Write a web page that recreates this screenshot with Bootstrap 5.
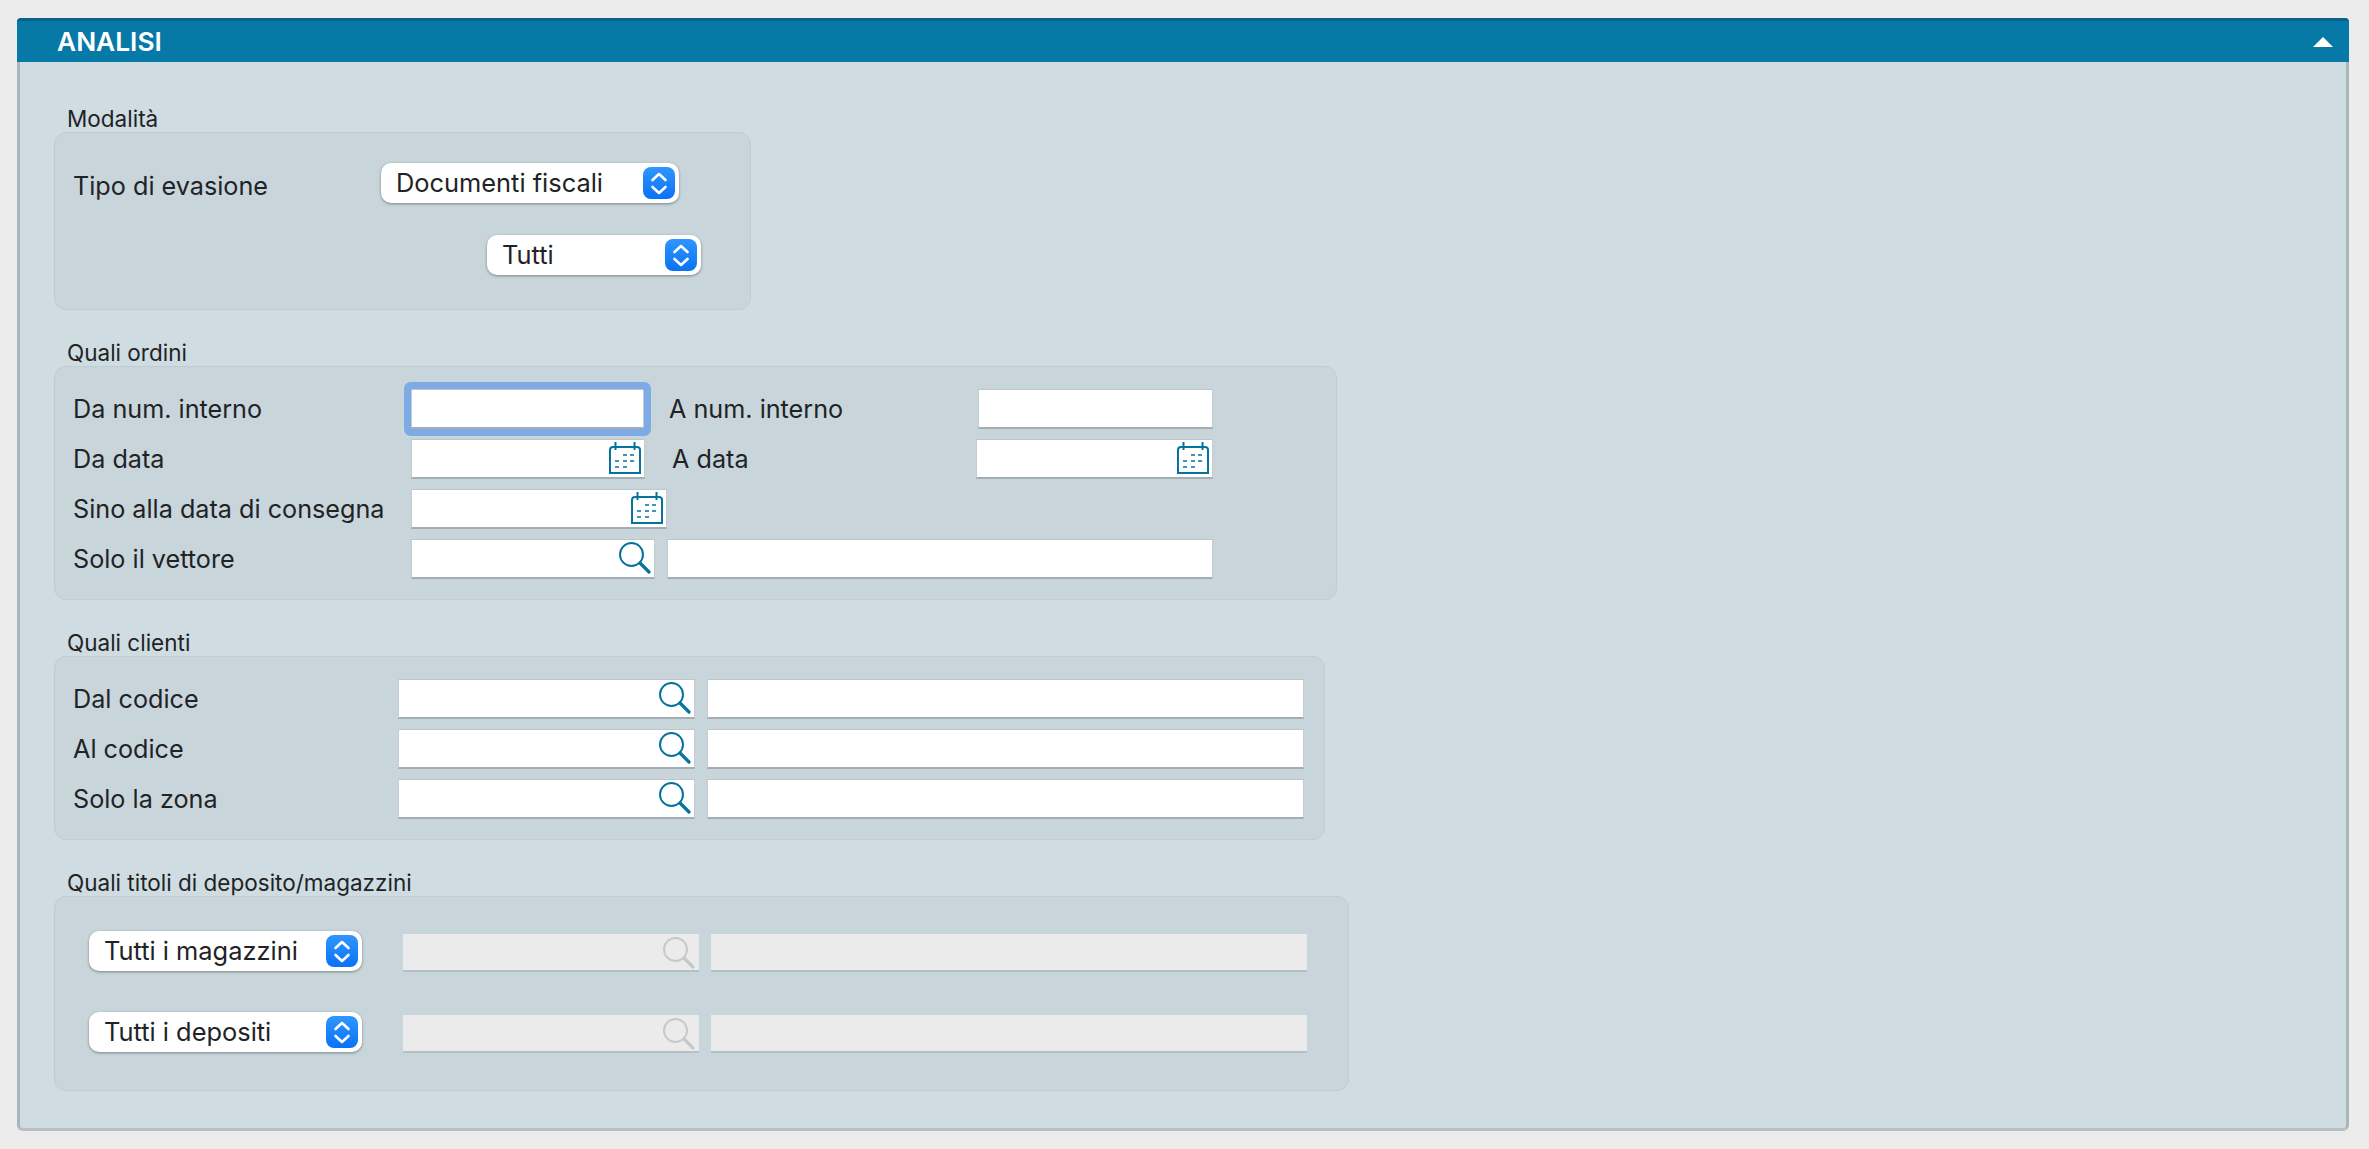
<!DOCTYPE html>
<html lang="it">
<head>
<meta charset="utf-8">
<title>Analisi</title>
<link href="https://cdn.jsdelivr.net/npm/bootstrap@5.3.0/dist/css/bootstrap.min.css" rel="stylesheet">
<style>
html, body { background: #ececec; }
body { font-family: Inter, "Liberation Sans", sans-serif; color: #1f2326; font-size: 25.2px; }
.sheet { margin: 18px 20px 19px 17px; background: #cfdce2; border-right: 3px solid #a9b6bc; border-bottom: 3px solid #b9bfc2; border-left: 3px solid #a9b6bc; border-radius: 4px 4px 6px 6px; }
.sheet-head { margin: 0 -3px; height: 44px; background: #0779a6; border-top: 3px solid #06628a; border-radius: 4px 4px 0 0; padding-left: 40px; padding-right: 16px; color: #fff; font-weight: 600; font-size: 26.3px; line-height: 41px; }
.tri { width: 0; height: 0; border-left: 10px solid transparent; border-right: 10px solid transparent; border-bottom: 10px solid #fff; }
.sheet-body { padding: 42px 0 37px 34px; }
.grp-title { height: 28px; line-height: 30px; padding-left: 13px; font-size: 22.5px; }
.grp-box { background: #c8d5db; border: 1px solid #bfcdd3; border-radius: 12px; }
.grp + .grp { margin-top: 28px; }
.w-a { width: 697px; height: 178px; padding: 30px 0 0 18px; }
.w-b { width: 1283px; padding: 22px 0 20px 18px; }
.w-c { width: 1271px; padding: 22px 0 20px 18px; }
.w-d { width: 1295px; padding: 34px 0 37px 34px; }
.lb-a { width: 308px; height: 40px; padding-top: 5px; }
.lb-b { width: 338px; padding-top: 2px; }
.lb-c { width: 325px; padding-top: 2px; }
.lb-d { width: 334px; padding: 2px 0 0 25px; }
.lb-e { width: 331px; padding: 2px 0 0 27px; }
.rw { height: 40px; }
.rw + .rw { margin-top: 10px; }
.field.form-control { height: 40px; padding: 0 8px; background: #fff; border: 0; border-top: 1px solid #bcc6cb; border-left: 1px solid #c3ccd1; border-right: 1px solid #c3ccd1; border-bottom: 2px solid #a3adb2; border-radius: 0; box-shadow: none; }
.ring.form-control { box-shadow: 0 0 0 7px #7eaae6; border-radius: 2px; }
.field.form-control:disabled { height: 38px; background: #ebebeb; border: 0; border-bottom: 2px solid #b3c0c7; }
.ico { position: absolute; width: 32px; height: 32px; pointer-events: none; right: 4px; top: 3px; }
.ink { fill: none; stroke: #06739f; stroke-width: 2; }
.ink-thin { fill: none; stroke: #06739f; stroke-width: 1.7; }
.ink-off { fill: none; stroke: #c6c8c9; stroke-width: 2; }
.pick { position: relative; height: 40px; }
.pick .form-select { height: 40px; padding: 0 40px 0 15px; font-size: 25.4px; color: #1f2326; background-color: #fff; background-image: none; border: 0; border-radius: 10px; box-shadow: 0 1px 3px rgba(0,0,0,.38); }
.pick svg { position: absolute; right: 4px; top: 4px; width: 32px; height: 32px; pointer-events: none; }
.sp-a { width: 298px; }
.sp-b { width: 214px; margin-left: 414px; margin-top: 32px; }
.sp-d { width: 273px; }
.w1 { width: 233px; } .w2 { width: 234px; } .w3 { width: 256px; } .w4 { width: 244px; } .w5 { width: 235px; } .w6 { width: 237px; } .w7 { width: 546px; } .w8 { width: 297px; } .w9 { width: 597px; } .w10 { width: 296px; } .w11 { width: 596px; }
.after { margin-left: 12px; }
.off { margin-left: 41px; margin-top: 3px; }
.off-b { margin-left: 12px; margin-top: 3px; }
.rw-d + .rw-d { margin-top: 40px; }
</style>
</head>
<body>
<svg width="0" height="0" class="position-absolute">
  <defs>
    <linearGradient id="blu" x1="0" y1="0" x2="0" y2="1"><stop offset="0" stop-color="#2f96ff"/><stop offset="1" stop-color="#0a72f5"/></linearGradient>
    <symbol id="step" viewBox="0 0 32 32"><rect width="32" height="32" rx="8" fill="url(#blu)"/><path d="M9.500 13 16 7l6.500 6M9.500 20l6.500 6 6.500-6" fill="none" stroke="#fff" stroke-width="2.600" stroke-linecap="round" stroke-linejoin="round"/></symbol>
    <symbol id="cal" viewBox="0 0 32 32"><path class="ink" d="M1 31V8q0-3 3-3h24q3 0 3 3v23z"/><path class="ink" d="M6.500 0v8M25.500 0v8"/><path class="ink-thin" d="M14 13h4M21 13h4M6 19h4M14 19h4M21 19h4M6 25h4M14 25h4"/></symbol>
    <symbol id="find" viewBox="0 0 32 32"><circle class="ink" cx="12.500" cy="12.500" r="11.500"/><path d="M21 21l9 9" fill="none" stroke="#06739f" stroke-width="3.200" stroke-linecap="round"/></symbol>
    <symbol id="find-off" viewBox="0 0 32 32"><circle class="ink-off" cx="12.500" cy="12.500" r="11.500"/><path d="M21 21l9 9" fill="none" stroke="#c6c8c9" stroke-width="3.200" stroke-linecap="round"/></symbol>
  </defs>
</svg>

<div class="sheet">
  <div class="sheet-head d-flex justify-content-between align-items-center">
    <span>ANALISI</span><span class="tri"></span>
  </div>
  <div class="sheet-body">

    <section class="grp">
      <div class="grp-title">Modalità</div>
      <div class="grp-box w-a">
        <div class="d-flex">
          <div class="lb-a">Tipo di evasione</div>
          <div class="pick sp-a">
            <select class="form-select"><option>Documenti fiscali</option></select>
            <svg><use href="#step"/></svg>
          </div>
        </div>
        <div class="pick sp-b">
          <select class="form-select"><option>Tutti</option></select>
          <svg><use href="#step"/></svg>
        </div>
      </div>
    </section>

    <section class="grp">
      <div class="grp-title">Quali ordini</div>
      <div class="grp-box w-b">
        <div class="rw d-flex align-items-center">
          <div class="lb-b">Da num. interno</div>
          <input class="field ring form-control w1" type="text">
          <div class="lb-d">A num. interno</div>
          <input class="field form-control w5" type="text">
        </div>
        <div class="rw d-flex align-items-center">
          <div class="lb-b">Da data</div>
          <div class="position-relative w2"><input class="field form-control" type="text"><svg class="ico"><use href="#cal"/></svg></div>
          <div class="lb-e">A data</div>
          <div class="position-relative w6"><input class="field form-control" type="text"><svg class="ico"><use href="#cal"/></svg></div>
        </div>
        <div class="rw d-flex align-items-center">
          <div class="lb-b">Sino alla data di consegna</div>
          <div class="position-relative w3"><input class="field form-control" type="text"><svg class="ico"><use href="#cal"/></svg></div>
        </div>
        <div class="rw d-flex align-items-center">
          <div class="lb-b">Solo il vettore</div>
          <div class="position-relative w4"><input class="field form-control" type="text"><svg class="ico"><use href="#find"/></svg></div>
          <input class="field form-control w7 after" type="text">
        </div>
      </div>
    </section>

    <section class="grp">
      <div class="grp-title">Quali clienti</div>
      <div class="grp-box w-c">
        <div class="rw d-flex align-items-center">
          <div class="lb-c">Dal codice</div>
          <div class="position-relative w8"><input class="field form-control" type="text"><svg class="ico"><use href="#find"/></svg></div>
          <input class="field form-control w9 after" type="text">
        </div>
        <div class="rw d-flex align-items-center">
          <div class="lb-c">Al codice</div>
          <div class="position-relative w8"><input class="field form-control" type="text"><svg class="ico"><use href="#find"/></svg></div>
          <input class="field form-control w9 after" type="text">
        </div>
        <div class="rw d-flex align-items-center">
          <div class="lb-c">Solo la zona</div>
          <div class="position-relative w8"><input class="field form-control" type="text"><svg class="ico"><use href="#find"/></svg></div>
          <input class="field form-control w9 after" type="text">
        </div>
      </div>
    </section>

    <section class="grp">
      <div class="grp-title">Quali titoli di deposito/magazzini</div>
      <div class="grp-box w-d">
        <div class="rw-d d-flex align-items-start">
          <div class="pick sp-d"><select class="form-select"><option>Tutti i magazzini</option></select><svg><use href="#step"/></svg></div>
          <div class="position-relative w10 off"><input class="field form-control" type="text" disabled><svg class="ico"><use href="#find-off"/></svg></div>
          <input class="field form-control w11 off-b" type="text" disabled>
        </div>
        <div class="rw-d d-flex align-items-start">
          <div class="pick sp-d"><select class="form-select"><option>Tutti i depositi</option></select><svg><use href="#step"/></svg></div>
          <div class="position-relative w10 off"><input class="field form-control" type="text" disabled><svg class="ico"><use href="#find-off"/></svg></div>
          <input class="field form-control w11 off-b" type="text" disabled>
        </div>
      </div>
    </section>

  </div>
</div>
<script src="https://cdn.jsdelivr.net/npm/bootstrap@5.3.0/dist/js/bootstrap.bundle.min.js"></script>
</body>
</html>
